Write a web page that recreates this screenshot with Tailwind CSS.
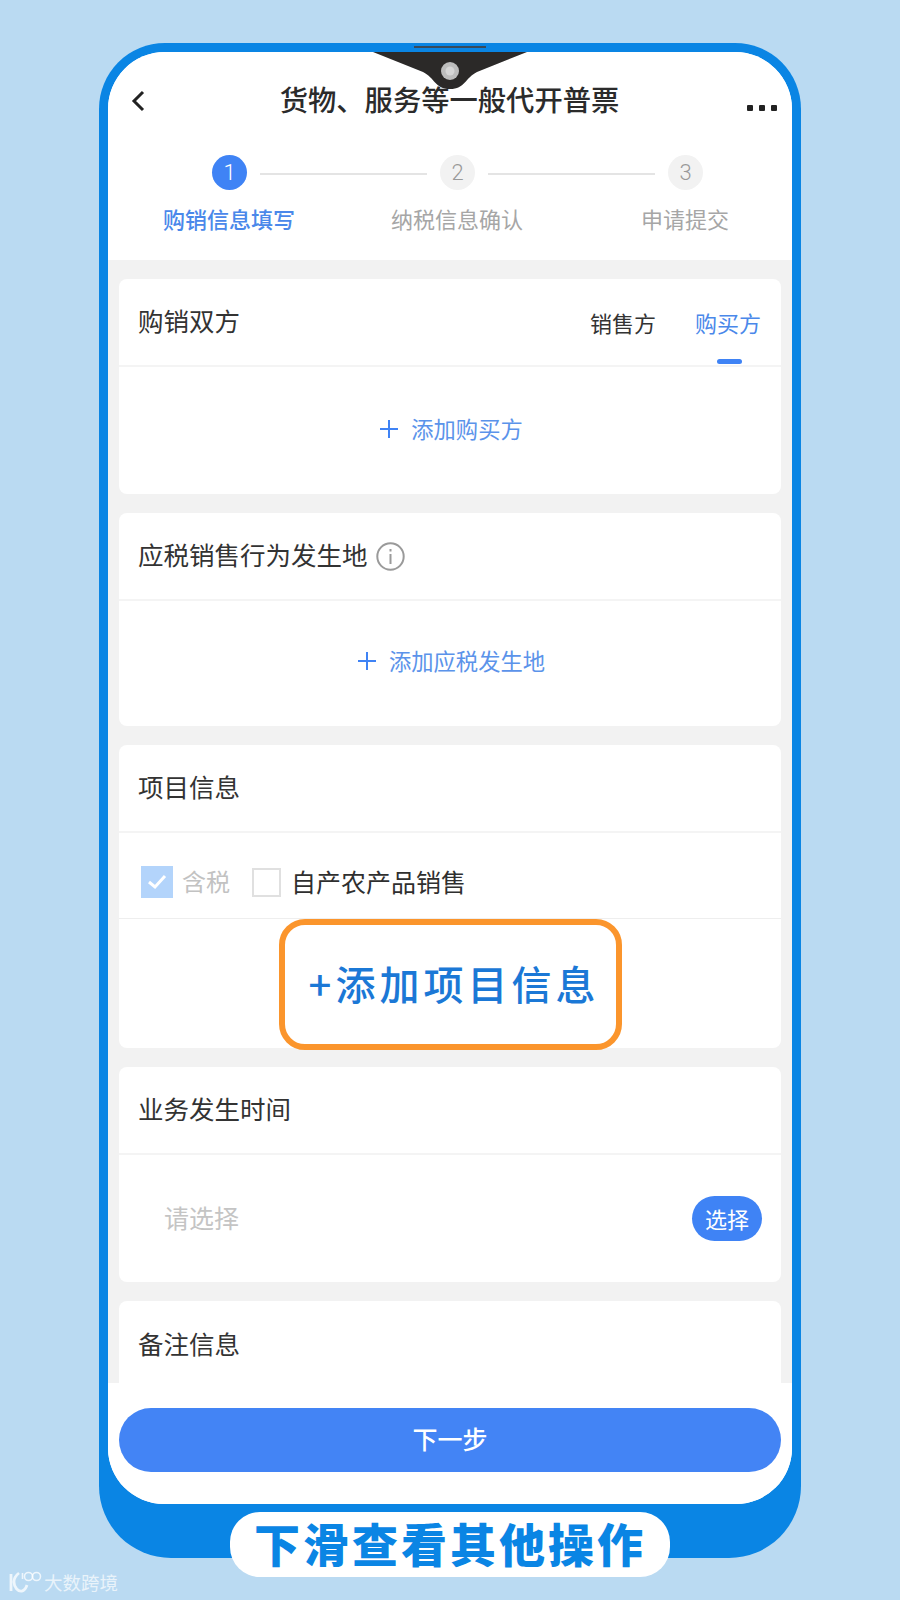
<!DOCTYPE html>
<html lang="zh">
<head>
<meta charset="utf-8">
<script src="https://cdn.jsdelivr.net/npm/@tailwindcss/browser@4"></script>
</head>
<body class="m-0">
<div class="relative w-[900px] h-[1600px] overflow-hidden bg-[#badaf2] pt-[43px] pl-[99px] font-['Noto_Sans_CJK_SC','Noto_Sans',sans-serif] text-[#333]">
  <div class="relative w-[702px] h-[1515px] bg-[#0a85e4] rounded-t-[66px] rounded-b-[72px] pt-[9px] px-[9px]">
    <div class="absolute left-[315px] top-[3px] w-[72px] h-[2px] bg-[#3a4a5a]"></div>
    <div class="relative w-[684px] h-[1452px] bg-white rounded-t-[57px] rounded-b-[56px] overflow-hidden flex flex-col">
      <svg class="absolute left-[265px] top-0" width="154" height="38" viewBox="0 0 154 38">
        <path d="M0 0H154L104 20C92 26 92 37 77 37C62 37 62 26 50 20Z" fill="#2b2928"/>
        <circle cx="77" cy="19" r="9" fill="#bdbdbd"/>
        <circle cx="77" cy="19" r="4.5" fill="#d6d6d6"/>
      </svg>

      <div class="bg-white shrink-0">
        <div class="h-[96px] flex items-center">
          <div class="w-[90px] pl-[23px] pt-[2px]">
            <svg width="14" height="22" viewBox="0 0 14 22" fill="none" stroke="#222" stroke-width="3"><path d="M12 2L3 11L12 20"/></svg>
          </div>
          <div class="flex-1 text-center text-[28.3px] leading-[40px] font-medium text-[#2b2b2b] whitespace-nowrap pb-[2px] pr-[1px]">货物、服务等一般代开普票</div>
          <div class="w-[90px] flex justify-end gap-[6px] pr-[15px] pt-[15px]">
            <span class="w-[6px] h-[6px] rounded-[1px] bg-[#222]"></span><span class="w-[6px] h-[6px] rounded-[1px] bg-[#222]"></span><span class="w-[6px] h-[6px] rounded-[1px] bg-[#222]"></span>
          </div>
        </div>
        <div class="mt-[7px] pl-[104px] flex items-center h-[35px]">
          <div class="w-[35px] h-[35px] rounded-full bg-[#3f83f5] text-white text-[22px] font-light flex items-center justify-center font-['Roboto',sans-serif]">1</div>
          <div class="ml-[13px] w-[167px] h-[2px] bg-[#e4e4e4] mr-[13px] mt-[3px]"></div>
          <div class="w-[35px] h-[35px] rounded-full bg-[#f2f2f2] text-[#999] text-[22px] font-light flex items-center justify-center font-['Roboto',sans-serif]">2</div>
          <div class="ml-[13px] w-[167px] h-[2px] bg-[#e4e4e4] mr-[13px] mt-[3px]"></div>
          <div class="w-[35px] h-[35px] rounded-full bg-[#f2f2f2] text-[#999] text-[22px] font-light flex items-center justify-center font-['Roboto',sans-serif]">3</div>
        </div>
        <div class="mt-[13px] pl-[7px] grid grid-cols-[228px_228px_228px] text-center text-[22px] leading-[30px] pb-[27px] whitespace-nowrap">
          <div class="text-[#4a88ea] font-medium">购销信息填写</div>
          <div class="text-[#a6a6a6]">纳税信息确认</div>
          <div class="text-[#a6a6a6]">申请提交</div>
        </div>
      </div>

      <div class="flex-1 min-h-0 overflow-hidden bg-[#f2f2f2] px-[11px] pt-[19px] flex flex-col gap-[19px]">
        <div class="h-[215px] shrink-0 bg-white rounded-lg flex flex-col">
          <div class="h-[88px] shrink-0 border-b-2 border-[#f4f4f4] flex items-center justify-between pl-[19px] pr-[20px]">
            <span class="text-[25.5px] text-[#333] mb-[3px]">购销双方</span>
            <div class="flex gap-[39px] text-[22px]">
              <span class="text-[#333]">销售方</span>
              <span class="relative text-[#4a88ea]">购买方
                <span class="absolute left-[22px] top-[53px] w-[25px] h-[5px] rounded-full bg-[#3f83f5]"></span>
              </span>
            </div>
          </div>
          <div class="flex-1 flex items-center justify-center gap-[13px] pb-[4px] pl-[3px] text-[22.3px] text-[#5b93ea]">
            <svg width="18" height="18" viewBox="0 0 18 18" stroke="#3f83f5" stroke-width="2"><path d="M9 0V18M0 9H18"/></svg>
            <span>添加购买方</span>
          </div>
        </div>

        <div class="h-[213px] shrink-0 bg-white rounded-lg flex flex-col">
          <div class="h-[88px] shrink-0 border-b-2 border-[#f4f4f4] flex items-center gap-[8px] pl-[19px]">
            <span class="text-[25.5px] text-[#333] mb-[3px]">应税销售行为发生地</span>
            <svg width="29" height="29" viewBox="0 0 29 29" fill="none" stroke="#9a9a9a" stroke-width="2"><circle cx="14.5" cy="14.5" r="13.2"/><path d="M14.5 12V22M14.5 7V9.5"/></svg>
          </div>
          <div class="flex-1 flex items-center justify-center gap-[13px] pb-[6px] pl-[3px] text-[22.3px] text-[#5b93ea]">
            <svg width="18" height="18" viewBox="0 0 18 18" stroke="#3f83f5" stroke-width="2"><path d="M9 0V18M0 9H18"/></svg>
            <span>添加应税发生地</span>
          </div>
        </div>

        <div class="h-[303px] shrink-0 bg-white rounded-lg flex flex-col">
          <div class="h-[88px] shrink-0 border-b-2 border-[#f4f4f4] flex items-center pl-[19px]">
            <span class="text-[25.5px] text-[#333] mb-[3px]">项目信息</span>
          </div>
          <div class="h-[86px] shrink-0 border-b border-[#eeeeee] pt-[33px] pl-[22px] flex items-start">
            <div class="w-[32px] h-[32px] bg-[#b3d4fb] flex items-center justify-center">
              <svg width="20" height="16" viewBox="0 0 20 16" fill="none" stroke="#fff" stroke-width="3"><path d="M2 8L8 13L18 2"/></svg>
            </div>
            <span class="ml-[9px] text-[24px] leading-[30px] text-[#c2c2c2]">含税</span>
            <div class="ml-[22px] mt-[2px] w-[29px] h-[29px] border-2 border-[#e0e0e0]"></div>
            <span class="ml-[10px] text-[25px] leading-[30px] text-[#2f2f2f]">自产农产品销售</span>
          </div>
          <div class="h-[128px] flex justify-center">
            <div class="w-[343px] h-[131px] shrink-0 border-[6px] border-[#fb952c] rounded-[26px] flex items-center justify-center pl-[8px] pb-[4px] text-[40px] leading-[48px] tracking-[4px] font-medium text-[#1b78d6] whitespace-nowrap">+添加项目信息</div>
          </div>
        </div>

        <div class="h-[215px] shrink-0 bg-white rounded-lg flex flex-col">
          <div class="h-[88px] shrink-0 border-b-2 border-[#f4f4f4] flex items-center pl-[19px]">
            <span class="text-[25.5px] text-[#333] mb-[3px]">业务发生时间</span>
          </div>
          <div class="flex-1 flex items-center justify-between pl-[45px] pr-[19px]">
            <span class="text-[25px] text-[#c4c4c4] mb-[1px]">请选择</span>
            <span class="w-[70px] h-[45px] rounded-full bg-[#3f83f5] text-white text-[22px] flex items-center justify-center">选择</span>
          </div>
        </div>

        <div class="h-[120px] shrink-0 bg-white rounded-lg">
          <div class="h-[88px] flex items-center pl-[19px]">
            <span class="text-[25.5px] text-[#333] mb-[3px]">备注信息</span>
          </div>
        </div>
      </div>

      <div class="h-[121px] shrink-0 bg-white px-[11px] pt-[25px]">
        <div class="h-[64px] rounded-full bg-[#4384f5] text-white text-[25px] font-medium flex items-center justify-center pb-[3px]">下一步</div>
      </div>
    </div>
  </div>

  <div class="absolute left-[230px] top-[1512px] w-[440px] h-[65px] rounded-[30px] bg-white flex items-center justify-center pb-[6px] text-[46px] leading-[60px] font-black tracking-[3px] text-[#0a85e4] whitespace-nowrap">下滑查看其他操作</div>

  <div class="absolute left-[8px] top-[1570px] flex items-center text-white/70">
    <svg width="34" height="24" viewBox="0 0 34 24" fill="none" stroke="#ffffff" stroke-opacity="0.75" stroke-width="2.8">
      <path d="M3 4V21M11 3C7 6 6 9 6 12C6 17 10 22 14 21C17 20.5 18 18 19 15"/>
      <circle cx="20.5" cy="6.5" r="4" stroke-width="1.6"/>
      <circle cx="28.5" cy="6.5" r="4" stroke-width="1.6"/>
      <path d="M14.5 3V9" stroke-width="1.6"/>
    </svg>
    <span class="ml-[2px] text-[18.5px] leading-[24px]">大数跨境</span>
  </div>
</div>
</body>
</html>
